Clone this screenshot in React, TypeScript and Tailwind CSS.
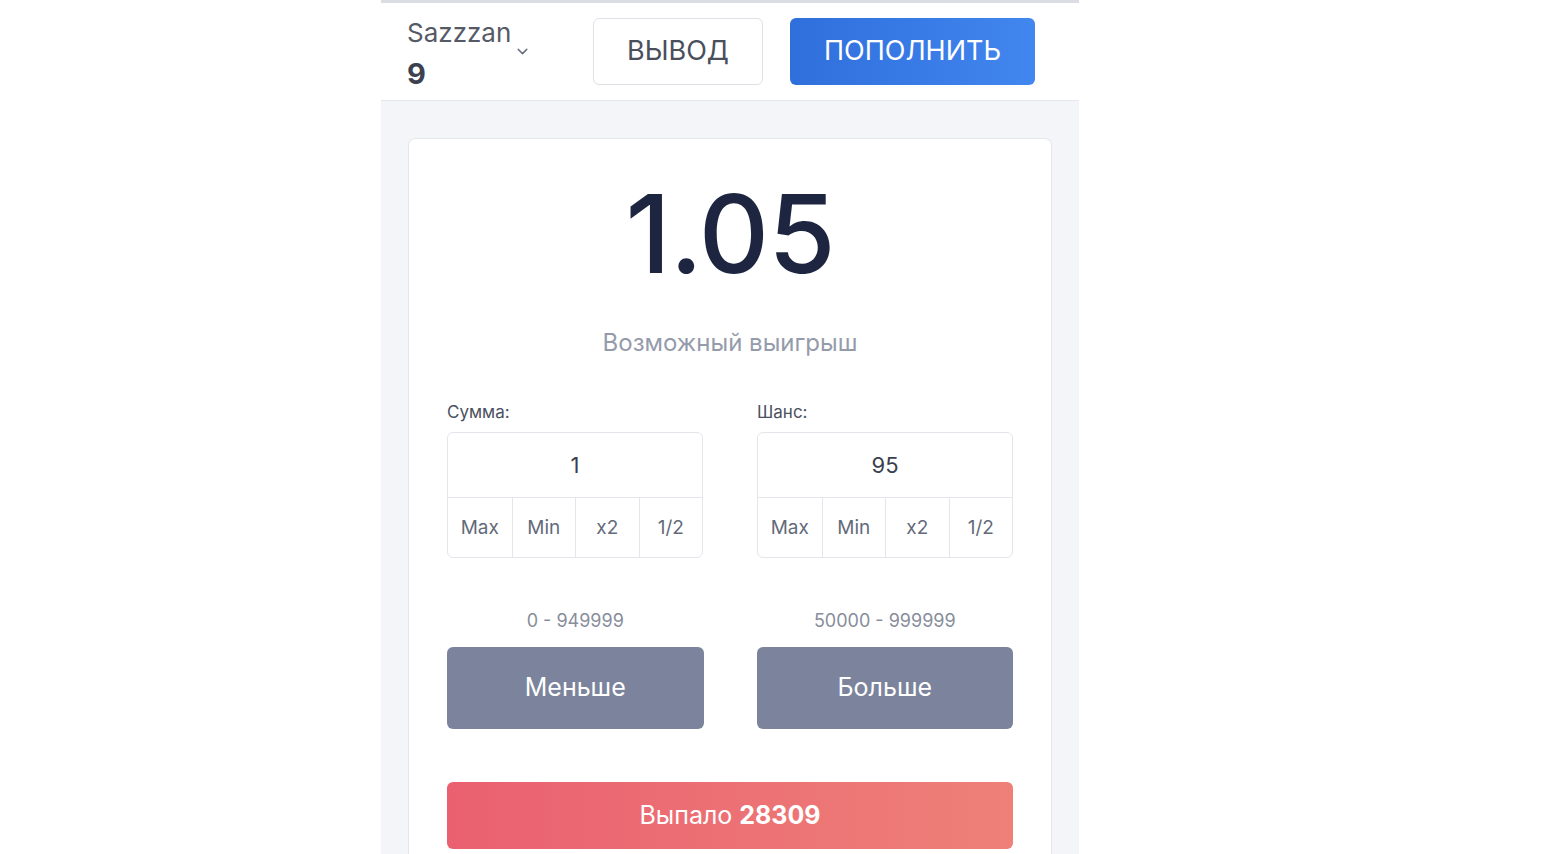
import { ChevronDown } from 'lucide-react'

const quick = ['Max', 'Min', 'x2', '1/2']

function Field({ label, value }: { label: string; value: string }) {
  return (
    <div className="flex flex-col">
      <span className="mb-[10px] text-[17px] leading-[20px] text-[#4b5160]">{label}</span>
      <div className="overflow-hidden rounded-[6px] border border-[#e4e6ec] bg-white">
        <div className="flex h-[65px] items-center justify-center border-b border-[#e4e6ec] text-[22px] text-[#3a3f4d]">
          {value}
        </div>
        <div className="grid h-[59px] grid-cols-4">
          {quick.map((q, i) => (
            <div
              key={q}
              className={`flex items-center justify-center pt-[2px] text-[19px] text-[#636a7a] ${
                i > 0 ? 'border-l border-[#e4e6ec]' : ''
              }`}
            >
              {q}
            </div>
          ))}
        </div>
      </div>
    </div>
  )
}

export default function App() {
  return (
    <div className="flex min-h-[854px] bg-white pl-[381px] font-['Inter',sans-serif]">
      <div className="flex min-h-[854px] w-[698px] flex-col border-t-[3px] border-[#dcdde2] bg-[#f4f5f9]">
        {/* Header */}
        <header className="flex h-[98px] items-start border-b border-[#e6e7ec] bg-white px-[26px] pt-[15px]">
          <div className="w-[186px]">
            <div className="flex h-[30px] items-start">
              <span className="text-[26px] leading-[30px] text-[#555a66]">Sazzzan</span>
              <ChevronDown className="ml-[3px] mt-[25px] h-[17px] w-[17px] shrink-0 text-[#6b7080]" strokeWidth={2} />
            </div>
            <div className="mt-[11px] text-[29px] font-bold leading-[30px] text-[#3c4150]">9</div>
          </div>
          <button className="h-[67px] w-[170px] rounded-[6px] border border-[#dfe1e7] bg-white text-[27px] text-[#4a4f5c]">
            ВЫВОД
          </button>
          <button className="ml-[27px] h-[67px] w-[245px] rounded-[6px] bg-gradient-to-r from-[#2f6fdc] to-[#4286ef] text-[27px] text-white">
            ПОПОЛНИТЬ
          </button>
        </header>

        {/* Bet card */}
        <div className="mx-[27px] mt-[37px] flex flex-1 flex-col rounded-t-[7px] border border-b-0 border-[#e4e6ec] bg-white px-[38px] pt-[30px]">
          <div className="text-center text-[109px] font-medium leading-[128px] tracking-[-1px] text-[#1d2540]">1.05</div>
          <div className="mt-[31px] text-center text-[24px] leading-[30px] text-[#959bab]">Возможный выигрыш</div>

          <div className="mt-[44px] grid grid-cols-2 gap-[54px]">
            <Field label="Сумма:" value="1" />
            <Field label="Шанс:" value="95" />
          </div>

          <div className="mt-[52px] grid grid-cols-2 gap-[53px]">
            <div className="flex flex-col items-center">
              <span className="text-[18px] leading-[22px] text-[#878d9b]">0 - 949999</span>
              <button className="mt-[15px] h-[82px] w-full rounded-[6px] bg-[#7b849c] text-[25px] text-white">
                Меньше
              </button>
            </div>
            <div className="flex flex-col items-center">
              <span className="text-[18px] leading-[22px] text-[#878d9b]">50000 - 999999</span>
              <button className="mt-[15px] h-[82px] w-full rounded-[6px] bg-[#7b849c] text-[25px] text-white">
                Больше
              </button>
            </div>
          </div>

          <div className="mt-[53px] flex h-[67px] items-center justify-center rounded-[6px] bg-gradient-to-r from-[#ea6070] to-[#ee8078] text-[25px] text-white">
            Выпало&nbsp;<span className="font-bold">28309</span>
          </div>
        </div>
      </div>
    </div>
  )
}
